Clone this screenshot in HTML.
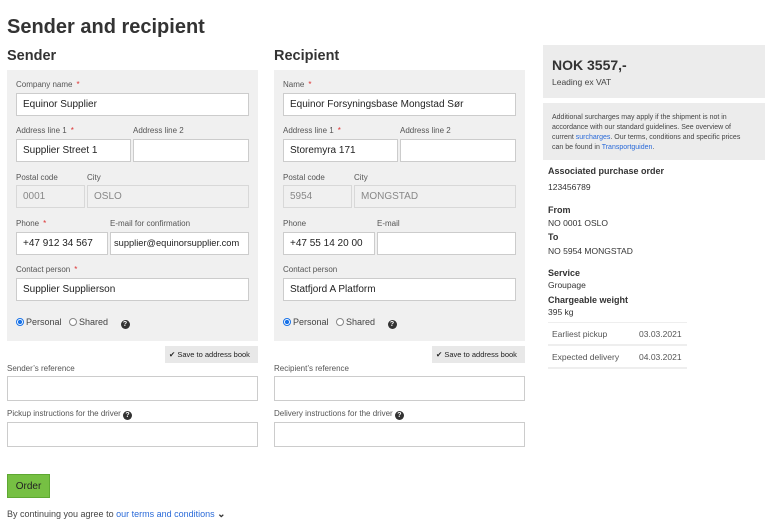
<!DOCTYPE html>
<html><head><meta charset="utf-8"><style>
*{box-sizing:border-box;margin:0;padding:0}
body{width:768px;height:530px;background:#fff;font-family:"Liberation Sans",sans-serif;color:#333;position:relative;overflow:hidden}
.a{position:absolute;white-space:nowrap}
.h1{font-size:20px;font-weight:bold;left:7px;top:16px;color:#333}
.h2{font-size:14.5px;font-weight:bold;top:48px;color:#333}
.panel{position:absolute;background:#f0f0f0;top:70px;width:251px;height:271px}
.lb{position:absolute;font-size:8px;color:#555;white-space:nowrap}
.lb b{color:#d33;font-weight:normal;margin-left:4px}
.in{position:absolute;height:23px;background:#fff;border:1px solid #ccc;font-size:10px;color:#222;padding:0 6px;line-height:21px;white-space:nowrap;overflow:hidden}
.dis{background:#f0f0f0;color:#888;border-color:#d8d8d8}
.rad{position:absolute;font-size:9px;color:#444;white-space:nowrap}
.dot{display:inline-block;width:8px;height:8px;border-radius:50%;border:1px solid #888;vertical-align:-1px;margin-right:2px;background:#fff}
.dot.on{border-color:#1a73e8;background:radial-gradient(circle,#1a73e8 45%,#fff 55%)}
.q{display:inline-block;width:9px;height:9px;border-radius:50%;background:#333;color:#fff;font-size:7px;font-weight:bold;text-align:center;line-height:9px;vertical-align:-1px}
.save{position:absolute;background:#e8e8e8;font-size:7.5px;color:#222;height:17px;line-height:17px;padding:0 4px;white-space:nowrap}
.r{font-size:8.5px;color:#333}
.rb{font-size:9px;font-weight:bold;color:#333}
a{color:#2a6ad8;text-decoration:none}
</style></head><body>
<div class="a h1">Sender and recipient</div>
<div class="a h2" style="left:7px">Sender</div>
<div class="a h2" style="left:274px">Recipient</div>

<div class="panel" style="left:7px"></div>
<div class="panel" style="left:274px"></div>

<!-- Sender -->
<div class="lb" style="left:16px;top:80px">Company name<b>*</b></div>
<div class="in" style="left:16px;top:93px;width:233px">Equinor Supplier</div>
<div class="lb" style="left:16px;top:126px">Address line 1<b>*</b></div>
<div class="lb" style="left:133px;top:126px">Address line 2</div>
<div class="in" style="left:16px;top:139px;width:115px">Supplier Street 1</div>
<div class="in" style="left:133px;top:139px;width:116px"></div>
<div class="lb" style="left:16px;top:173px">Postal code</div>
<div class="lb" style="left:87px;top:173px">City</div>
<div class="in dis" style="left:16px;top:185px;width:69px">0001</div>
<div class="in dis" style="left:87px;top:185px;width:162px">OSLO</div>
<div class="lb" style="left:16px;top:219px">Phone<b>*</b></div>
<div class="lb" style="left:110px;top:219px">E-mail for confirmation</div>
<div class="in" style="left:16px;top:232px;width:92px">+47 912 34 567</div>
<div class="in" style="left:110px;top:232px;width:139px;padding:0 3px;font-size:9.3px">supplier@equinorsupplier.com</div>
<div class="lb" style="left:16px;top:265px">Contact person<b>*</b></div>
<div class="in" style="left:16px;top:278px;width:233px">Supplier Supplierson</div>
<div class="rad" style="left:16px;top:317px"><span class="dot on"></span>Personal &nbsp;&nbsp;<span class="dot"></span>Shared &nbsp;&nbsp;&nbsp;&nbsp;<span class="q">?</span></div>
<div class="save" style="left:165px;top:346px;width:93px">✔ Save to address book</div>
<div class="lb" style="left:7px;top:364px">Sender’s reference</div>
<div class="in" style="left:7px;top:376px;width:251px;height:25px"></div>
<div class="lb" style="left:7px;top:409px">Pickup instructions for the driver <span class="q">?</span></div>
<div class="in" style="left:7px;top:422px;width:251px;height:25px"></div>

<!-- Recipient -->
<div class="lb" style="left:283px;top:80px">Name<b>*</b></div>
<div class="in" style="left:283px;top:93px;width:233px">Equinor Forsyningsbase Mongstad Sør</div>
<div class="lb" style="left:283px;top:126px">Address line 1<b>*</b></div>
<div class="lb" style="left:400px;top:126px">Address line 2</div>
<div class="in" style="left:283px;top:139px;width:115px">Storemyra 171</div>
<div class="in" style="left:400px;top:139px;width:116px"></div>
<div class="lb" style="left:283px;top:173px">Postal code</div>
<div class="lb" style="left:354px;top:173px">City</div>
<div class="in dis" style="left:283px;top:185px;width:69px">5954</div>
<div class="in dis" style="left:354px;top:185px;width:162px">MONGSTAD</div>
<div class="lb" style="left:283px;top:219px">Phone</div>
<div class="lb" style="left:377px;top:219px">E-mail</div>
<div class="in" style="left:283px;top:232px;width:92px">+47 55 14 20 00</div>
<div class="in" style="left:377px;top:232px;width:139px"></div>
<div class="lb" style="left:283px;top:265px">Contact person</div>
<div class="in" style="left:283px;top:278px;width:233px">Statfjord A Platform</div>
<div class="rad" style="left:283px;top:317px"><span class="dot on"></span>Personal &nbsp;&nbsp;<span class="dot"></span>Shared &nbsp;&nbsp;&nbsp;&nbsp;<span class="q">?</span></div>
<div class="save" style="left:432px;top:346px;width:93px">✔ Save to address book</div>
<div class="lb" style="left:274px;top:364px">Recipient’s reference</div>
<div class="in" style="left:274px;top:376px;width:251px;height:25px"></div>
<div class="lb" style="left:274px;top:409px">Delivery instructions for the driver <span class="q">?</span></div>
<div class="in" style="left:274px;top:422px;width:251px;height:25px"></div>

<div class="a" style="left:7px;top:474px;width:43px;height:24px;background:#76c043;border:1px solid #5ea832;font-size:10px;color:#222;text-align:center;line-height:23px">Order</div>
<div class="a" style="left:7px;top:509px;font-size:9px;color:#444">By continuing you agree to <a>our terms and conditions</a> <b style="font-size:10px;color:#333">&#8964;</b></div>

<!-- Right -->
<div class="a" style="left:543px;top:45px;width:222px;height:53px;background:#ececec"></div>
<div class="a" style="left:552px;top:57px;font-size:14px;font-weight:bold">NOK 3557,-</div>
<div class="a" style="left:552px;top:77px;font-size:8.5px;color:#444">Leading ex VAT</div>
<div class="a" style="left:543px;top:103px;width:222px;height:57px;background:#ececec"></div>
<div class="a" style="left:552px;top:113px;font-size:7px;color:#444;line-height:10px;white-space:normal;width:200px">Additional surcharges may apply if the shipment is not in accordance with our standard guidelines. See overview of current <a>surcharges</a>. Our terms, conditions and specific prices can be found in <a>Transportguiden</a>.</div>
<div class="a rb" style="left:548px;top:166px">Associated purchase order</div>
<div class="a r" style="left:548px;top:182px">123456789</div>
<div class="a rb" style="left:548px;top:205px">From</div>
<div class="a r" style="left:548px;top:218px">NO 0001 OSLO</div>
<div class="a rb" style="left:548px;top:232px">To</div>
<div class="a r" style="left:548px;top:246px">NO 5954 MONGSTAD</div>
<div class="a rb" style="left:548px;top:268px">Service</div>
<div class="a r" style="left:548px;top:280px">Groupage</div>
<div class="a rb" style="left:548px;top:295px">Chargeable weight</div>
<div class="a r" style="left:548px;top:307px">395 kg</div>
<div class="a" style="left:548px;top:322px;width:139px;height:1px;background:#eee"></div>
<div class="a r" style="left:552px;top:329px;color:#555">Earliest pickup</div>
<div class="a r" style="left:639px;top:329px;color:#555">03.03.2021</div>
<div class="a" style="left:548px;top:344px;width:139px;height:2px;background:#eee"></div>
<div class="a r" style="left:552px;top:352px;color:#555">Expected delivery</div>
<div class="a r" style="left:639px;top:352px;color:#555">04.03.2021</div>
<div class="a" style="left:548px;top:367px;width:139px;height:2px;background:#eee"></div>
</body></html>
